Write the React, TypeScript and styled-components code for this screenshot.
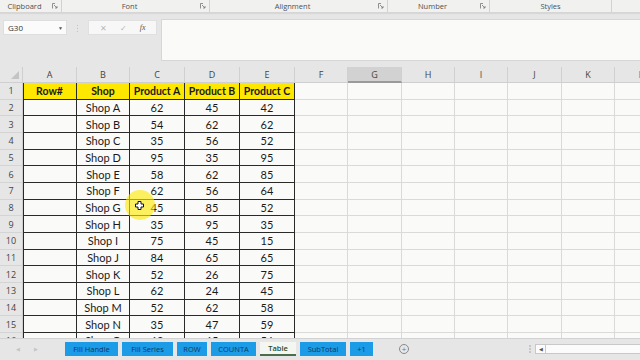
import React from "react";
import styled, { createGlobalStyle } from "styled-components";

const GlobalStyle = createGlobalStyle`
  html, body {
    margin: 0;
    padding: 0;
    background: #e6e6e6;
  }
  * { box-sizing: border-box; }
`;

const Screen = styled.div`
  width: 640px;
  height: 360px;
  overflow: hidden;
  display: flex;
  flex-direction: column;
  background: #e6e6e6;
  font-family: "Open Sans", "Noto Sans", sans-serif;
`;

const RibbonLabels = styled.div`
  height: 13px;
  display: flex;
  background: #f1f1f0;
  border-bottom: 1px solid #d6d6d6;
  box-shadow: 0 1px 1px rgba(0, 0, 0, 0.06);
`;

const Group = styled.div<{ $w: number }>`
  width: ${(p) => p.$w}px;
  flex: none;
  display: flex;
  align-items: center;
  border-right: 1px solid #d2d2d2;
  height: 100%;
`;

const GroupLabel = styled.span`
  flex: 1;
  text-align: center;
  font-size: 7.5px;
  color: #505050;
  line-height: 12px;
`;

const Launcher = styled.span`
  width: 12px;
  display: flex;
  justify-content: center;
  align-items: center;
`;

const FormulaArea = styled.div`
  height: 54px;
  display: flex;
  align-items: flex-start;
  padding: 6px 0 0 3px;
`;

const NameBox = styled.div`
  width: 64px;
  height: 15px;
  margin-top: 1px;
  background: #fbfbfb;
  border: 1px solid #dedede;
  display: flex;
  align-items: center;
  justify-content: space-between;
  padding: 0 3px 0 4px;
  font-size: 8px;
  color: #333;
`;

const Caret = styled.span`
  font-size: 5px;
  color: #555;
`;

const Dots = styled.div`
  width: 21px;
  height: 15px;
  margin-top: 2px;
  display: flex;
  flex-direction: column;
  align-items: center;
  justify-content: center;
  gap: 1.5px;
  span {
    width: 1.5px;
    height: 1.5px;
    background: #b5b5b5;
    border-radius: 50%;
  }
`;

const FxButtons = styled.div`
  width: 69px;
  height: 15px;
  margin-top: 1px;
  background: #f7f7f7;
  border: 1px solid #e0e0e0;
  display: flex;
  align-items: center;
  justify-content: space-around;
  padding: 0 4px;
  font-size: 8px;
  color: #b8b8b8;
`;

const Fx = styled.span`
  font-family: "Liberation Serif", serif;
  font-style: italic;
  color: #555;
  font-size: 8px;
`;

const FormulaInput = styled.div`
  flex: 1;
  height: 42px;
  margin-left: 4px;
  background: #fafbf9;
  border: 1px solid #d6d6d6;
  border-right: none;
`;

const Sheet = styled.div`
  position: relative;
  height: 271px;
  overflow: hidden;
  display: grid;
  grid-template-columns: 23px 54px 53px 55px 55px 55px 53px 54px 53px 53px 54px 53px 53px;
  grid-template-rows: 16px repeat(16, 16.67px);
  background: #fafbf9;
  font-family: Lato, "Open Sans", sans-serif;
`;

const Corner = styled.div`
  background: #e6e6e6;
  border-right: 1px solid #cfcfcf;
  border-bottom: 1px solid #cfcfcf;
  position: relative;
  &::after {
    content: "";
    position: absolute;
    right: 3px;
    bottom: 3px;
    border-style: solid;
    border-width: 0 0 8px 8px;
    border-color: transparent transparent #c4c4c4 transparent;
  }
`;

const ColHead = styled.div<{ $sel?: boolean }>`
  background: ${(p) => (p.$sel ? "#d2d2d2" : "#e6e6e6")};
  border-right: 1px solid #d0d0d0;
  border-bottom: ${(p) => (p.$sel ? "2px solid #9a9a9a" : "1px solid #cfcfcf")};
  display: flex;
  align-items: center;
  justify-content: center;
  font-family: "Open Sans", sans-serif;
  font-size: 9px;
  color: #444;
  overflow: hidden;
`;

const RowHead = styled.div`
  background: #e6e6e6;
  border-right: 1px solid #cfcfcf;
  border-bottom: 1px solid #d4d4d4;
  display: flex;
  align-items: center;
  justify-content: center;
  font-family: "Open Sans", sans-serif;
  font-size: 9px;
  color: #444;
`;

const Cell = styled.div<{ $table?: boolean; $head?: boolean; $left?: boolean }>`
  border-right: 1px solid ${(p) => (p.$table ? "#2a2a2a" : "#dadada")};
  border-bottom: 1px solid ${(p) => (p.$table ? "#2a2a2a" : "#dadada")};
  box-shadow: ${(p) => (p.$left ? "inset 1px 0 0 #2a2a2a" : "none")};
  background: ${(p) => (p.$head ? "#ffe800" : "transparent")};
  display: flex;
  align-items: center;
  justify-content: center;
  font-size: ${(p) => (p.$head ? "10.5px" : "11px")};
  font-weight: ${(p) => (p.$head ? 700 : 400)};
  color: #1a1a1a;
  white-space: nowrap;
  overflow: hidden;
`;

const Highlight = styled.div`
  position: absolute;
  left: 125px;
  top: 123px;
  width: 30px;
  height: 30px;
  border-radius: 50%;
  background: rgba(255, 232, 0, 0.62);
  pointer-events: none;
`;

const Pointer = styled.svg`
  position: absolute;
  left: 135px;
  top: 134px;
`;

const TabBar = styled.div`
  height: 22px;
  display: flex;
  align-items: flex-start;
  padding-top: 3px;
  background: #e6e6e6;
  border-top: 1px solid #d2d2d2;
`;

const Nav = styled.div`
  width: 65px;
  height: 14px;
  display: flex;
  align-items: center;
  padding-left: 16px;
  gap: 14px;
  font-size: 5px;
  color: #c4c4c4;
`;

const Tab = styled.div<{ $active?: boolean; $w: number }>`
  width: ${(p) => p.$w}px;
  height: 14px;
  margin-right: 4px;
  display: flex;
  align-items: center;
  justify-content: center;
  white-space: nowrap;
  overflow: hidden;
  font-size: 7.5px;
  background: ${(p) => (p.$active ? "#f4f6f2" : "#1c9ce6")};
  color: ${(p) => (p.$active ? "#2b4d2b" : "#123566")};
  font-weight: ${(p) => (p.$active ? 600 : 400)};
  border-bottom: ${(p) => (p.$active ? "2px solid #4a6e4a" : "none")};
`;

const AddSheet = styled.div`
  width: 10px;
  height: 10px;
  margin: 2px 0 0 22px;
  border: 1px solid #8a8a8a;
  border-radius: 50%;
  display: flex;
  align-items: center;
  justify-content: center;
  font-size: 8px;
  line-height: 8px;
  color: #777;
`;

const Spacer = styled.div`
  flex: 1;
`;

const Splitter = styled(Dots)`
  width: 10px;
  height: 10px;
  margin: 2px 0 0;
  span {
    background: #c2c2c2;
  }
`;

const HScroll = styled.div`
  width: 105px;
  height: 10px;
  margin-top: 2px;
  background: #fbfbfb;
  border: 1px solid #c8c8c8;
  border-right: none;
  display: flex;
`;

const ScrollArrow = styled.div`
  width: 10px;
  border-right: 1px solid #c8c8c8;
  display: flex;
  align-items: center;
  justify-content: center;
  font-size: 5px;
  color: #555;
`;

const LauncherIcon = () => (
  <svg width="6" height="6" viewBox="0 0 6 6">
    <path d="M0.5 5.5V0.5H3" fill="none" stroke="#777" strokeWidth="0.8" />
    <path d="M2 2L5 5M5 3V5H3" fill="none" stroke="#777" strokeWidth="0.8" />
  </svg>
);

const groups = [
  { label: "Clipboard", w: 62, launcher: true },
  { label: "Font", w: 148, launcher: true },
  { label: "Alignment", w: 178, launcher: true },
  { label: "Number", w: 102, launcher: true },
  { label: "Styles", w: 122, launcher: false },
];

const columns = ["A", "B", "C", "D", "E", "F", "G", "H", "I", "J", "K", "L"];

const header = ["Row#", "Shop", "Product A", "Product B", "Product C"];

const data: (string | number)[][] = [
  ["Shop A", 62, 45, 42],
  ["Shop B", 54, 62, 62],
  ["Shop C", 35, 56, 52],
  ["Shop D", 95, 35, 95],
  ["Shop E", 58, 62, 85],
  ["Shop F", 62, 56, 64],
  ["Shop G", 45, 85, 52],
  ["Shop H", 35, 95, 35],
  ["Shop I", 75, 45, 15],
  ["Shop J", 84, 65, 65],
  ["Shop K", 52, 26, 75],
  ["Shop L", 62, 24, 45],
  ["Shop M", 52, 62, 58],
  ["Shop N", 35, 47, 59],
  ["Shop O", 62, 65, 56],
];

const tabs = [
  { name: "Fill Handle", w: 53 },
  { name: "Fill Series", w: 51 },
  { name: "ROW", w: 30 },
  { name: "COUNTA", w: 45 },
  { name: "Table", w: 36, active: true },
  { name: "SubTotal", w: 46 },
  { name: "+1", w: 23 },
];

const App = () => {
  const rows: (string | number)[][] = [header, ...data.map((d) => ["", ...d])];

  return (
    <>
      <GlobalStyle />
      <Screen>
        <RibbonLabels>
          {groups.map((g) => (
            <Group key={g.label} $w={g.w}>
              <GroupLabel>{g.label}</GroupLabel>
              {g.launcher && (
                <Launcher>
                  <LauncherIcon />
                </Launcher>
              )}
            </Group>
          ))}
        </RibbonLabels>

        <FormulaArea>
          <NameBox>
            <span>G30</span>
            <Caret>▼</Caret>
          </NameBox>
          <Dots>
            <span />
            <span />
            <span />
          </Dots>
          <FxButtons>
            <span>✕</span>
            <span>✓</span>
            <Fx>fx</Fx>
          </FxButtons>
          <FormulaInput />
        </FormulaArea>

        <Sheet>
          <Corner />
          {columns.map((c) => (
            <ColHead key={c} $sel={c === "G"}>
              {c}
            </ColHead>
          ))}
          {rows.map((row, r) => (
            <React.Fragment key={r}>
              <RowHead>{r + 1}</RowHead>
              {columns.map((c, ci) => {
                const inTable = ci < 5;
                return (
                  <Cell key={c} $table={inTable} $head={inTable && r === 0} $left={ci === 0}>
                    {inTable ? row[ci] : ""}
                  </Cell>
                );
              })}
            </React.Fragment>
          ))}
          <Highlight />
          <Pointer width="9" height="9" viewBox="0 0 9 9">
            <path d="M3 0.5H6V3H8.5V6H6V8.5H3V6H0.5V3H3Z" fill="#fff" stroke="#111" strokeWidth="1" />
          </Pointer>
        </Sheet>

        <TabBar>
          <Nav>
            <span>◀</span>
            <span>▶</span>
          </Nav>
          {tabs.map((t) => (
            <Tab key={t.name} $w={t.w} $active={t.active}>
              {t.name}
            </Tab>
          ))}
          <AddSheet>+</AddSheet>
          <Spacer />
          <Splitter>
            <span />
            <span />
            <span />
          </Splitter>
          <HScroll>
            <ScrollArrow>◀</ScrollArrow>
          </HScroll>
        </TabBar>
      </Screen>
    </>
  );
};

export default App;
